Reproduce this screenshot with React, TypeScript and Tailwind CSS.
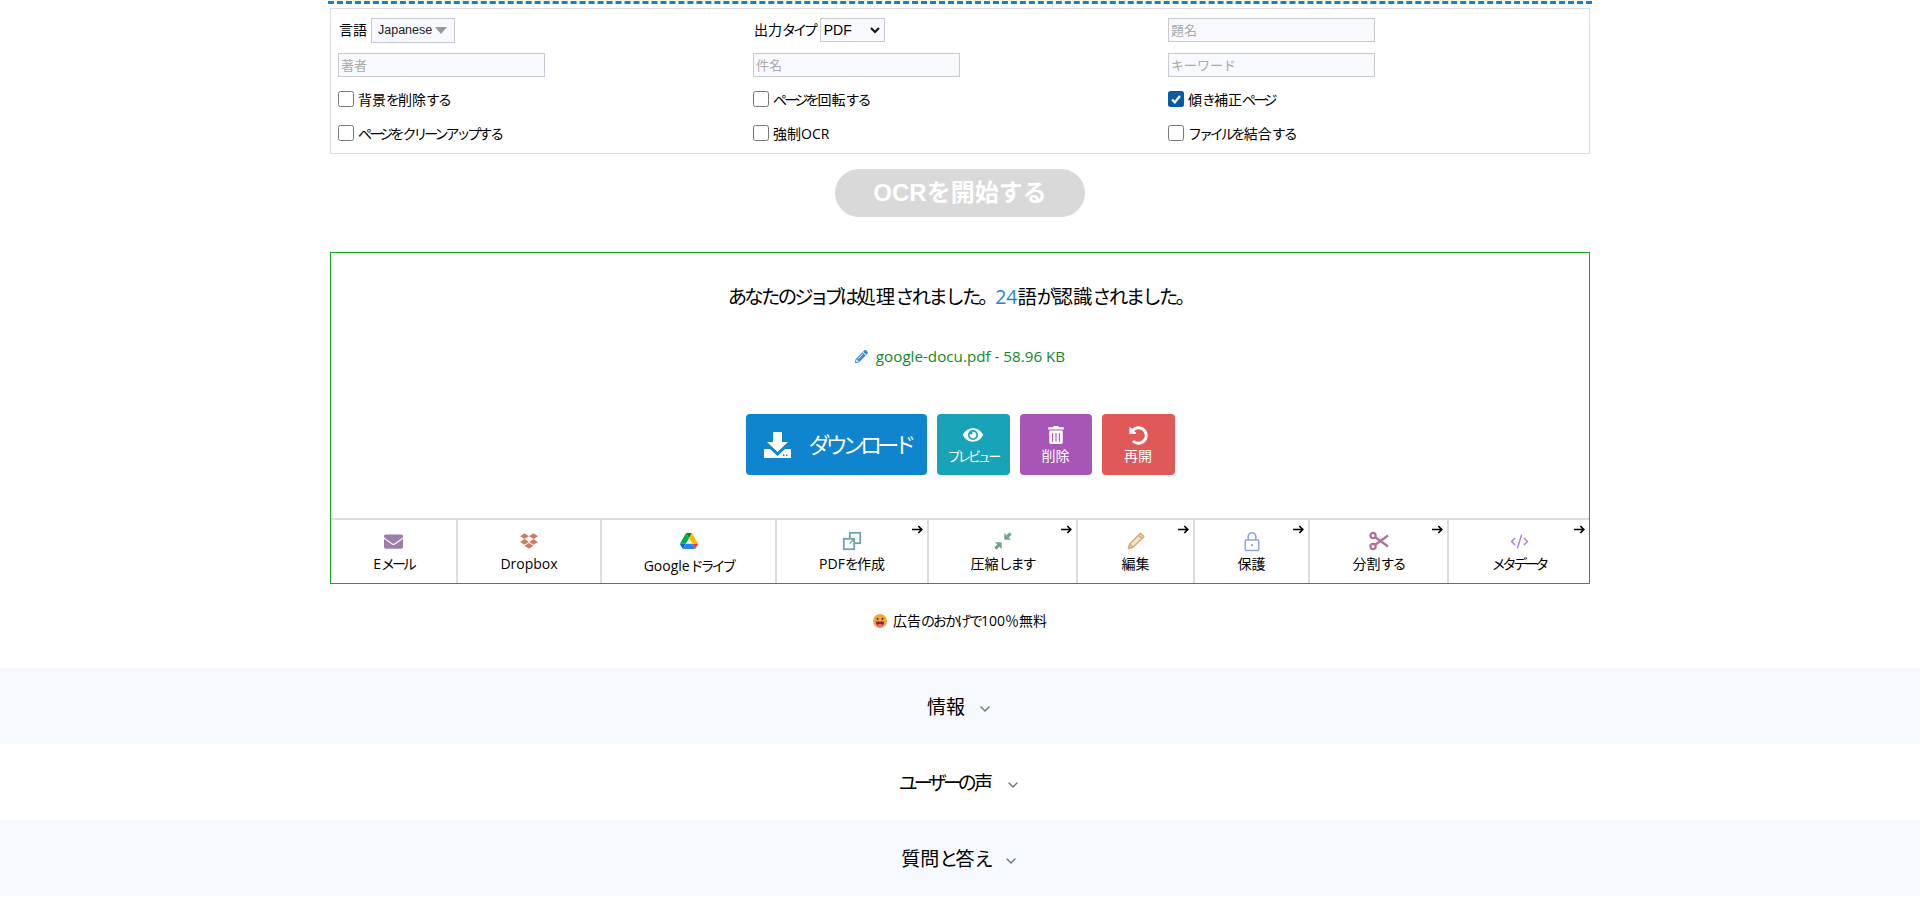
import React from "react";
import { FaEnvelope, FaDropbox, FaEye, FaTrashAlt, FaUndoAlt, FaPencilAlt } from "react-icons/fa";
import { ChevronDown, CodeXml } from "lucide-react";

const jp = "font-['Open_Sans','Noto_Sans_CJK_JP',sans-serif]";

// The reference's Japanese face has narrow kana: hiragana and katakana are tightened, kanji stay full width.
function J({ t }: { t: string }) {
  const runs = t.match(/[\u30a0-\u30ff]+|[\u3040-\u309f\u3002]+|[^\u3002\u3040-\u30ff]+/g) ?? [];
  return (
    <>
      {runs.map((r, i) => {
        const c = r.charCodeAt(0);
        if (c >= 0x30a0 && c <= 0x30ff) return <span key={i} className="tracking-[-0.22em]">{r}</span>;
        if ((c >= 0x3040 && c <= 0x309f) || c === 0x3002) return <span key={i} className="tracking-[-0.14em]">{r}</span>;
        return <span key={i}>{r}</span>;
      })}
    </>
  );
}

function GDrive() {
  return (
    <svg width="18" height="16" viewBox="0 0 87.3 78">
      <path d="m6.6 66.85 3.85 6.65c.8 1.4 1.95 2.5 3.3 3.3l13.75-23.8h-27.5c0 1.55.4 3.1 1.2 4.5z" fill="#0066da" />
      <path d="m43.65 25-13.75-23.8c-1.35.8-2.5 1.9-3.3 3.3l-25.4 44a9.06 9.06 0 0 0 -1.2 4.5h27.5z" fill="#00ac47" />
      <path d="m73.55 76.8c1.35-.8 2.5-1.9 3.3-3.3l1.6-2.75 7.65-13.25c.8-1.4 1.2-2.95 1.2-4.5h-27.502l5.852 11.5z" fill="#ea4335" />
      <path d="m43.65 25 13.75-23.8c-1.35-.8-2.9-1.2-4.5-1.2h-18.5c-1.6 0-3.15.45-4.5 1.2z" fill="#00832d" />
      <path d="m59.8 53h-32.3l-13.75 23.8c1.35.8 2.9 1.2 4.5 1.2h50.8c1.6 0 3.15-.45 4.5-1.2z" fill="#2684fc" />
      <path d="m73.4 26.5-12.7-22c-.8-1.4-1.95-2.5-3.3-3.3l-13.75 23.8 16.15 28h27.45c0-1.55-.4-3.1-1.2-4.5z" fill="#ffba00" />
    </svg>
  );
}

function CreateIcon() {
  return (
    <svg width="20" height="20" viewBox="0 0 20 20" fill="none" stroke="#6ba6b0" strokeWidth="1.8">
      <rect x="7.8" y="1.8" width="10.4" height="10.4" fill="#fff" />
      <rect x="1.8" y="7.8" width="10.4" height="10.4" fill="#fff" />
      <path d="M7.5 12.5 12 8M9 8h3v3" strokeWidth="1.2" />
    </svg>
  );
}

function CompressIcon() {
  return (
    <svg width="20" height="20" viewBox="0 0 18 18" fill="#6fa38f">
      <path d="M16.8 3.2 14.8 1.2 12.2 3.8 10.2 1.8V7.8H16.2L14.2 5.8Z" />
      <path d="M1.2 14.8 3.2 16.8 5.8 14.2 7.8 16.2V10.2H1.8L3.8 12.2Z" />
    </svg>
  );
}

function PencilIcon() {
  return (
    <svg width="20" height="20" viewBox="0 0 20 20" fill="#f5e6d2" stroke="#d9a86c" strokeWidth="1.5" strokeLinejoin="round">
      <path d="M14.5 2.2 17.8 5.5 7 16.3 2.4 17.6 3.7 13Z" />
      <path d="M12.6 4.1 15.9 7.4M3.7 13 7 16.3" fill="none" />
    </svg>
  );
}

function LockIcon() {
  return (
    <svg width="18" height="21" viewBox="0 0 18 21" fill="none" stroke="#8ca6d6" strokeWidth="1.5">
      <path d="M5.2 9V5.5a3.8 3.8 0 0 1 7.6 0V9" />
      <rect x="2.3" y="9" width="13.4" height="10.5" rx="1" />
      <circle cx="9" cy="14.2" r="1.1" fill="#8ca6d6" stroke="none" />
    </svg>
  );
}

function ScissorsIcon() {
  return (
    <svg width="20" height="20" viewBox="0 0 20 20" fill="none" stroke="#b56f9a" strokeWidth="2.2">
      <circle cx="4" cy="4.5" r="2.6" />
      <circle cx="4" cy="15.5" r="2.6" />
      <path d="M6 6 19 15.5M6 14 19 4.5" />
    </svg>
  );
}

function CornerArrow() {
  return (
    <svg width="11" height="9" viewBox="0 0 11 9" fill="none" stroke="#000" strokeWidth="1.7" className="absolute top-[5px] right-[4px]">
      <path d="M0 4.5h9.5M6.3 1l3.5 3.5L6.3 8" />
    </svg>
  );
}

function SmileEmoji() {
  return (
    <svg width="14" height="14" viewBox="0 0 14 14" className="shrink-0">
      <circle cx="7" cy="7" r="7" fill="#f5a63a" />
      <circle cx="4.6" cy="4.8" r="1.1" fill="#5b3a1e" />
      <circle cx="9.4" cy="4.8" r="1.1" fill="#5b3a1e" />
      <path d="M2.8 7.4h8.4c0 3-1.8 5-4.2 5s-4.2-2-4.2-5z" fill="#8c2358" />
      <path d="M4.5 11c.8-1.2 4.2-1.2 5 0-.7.9-1.5 1.4-2.5 1.4s-1.8-.5-2.5-1.4z" fill="#ef6f9a" />
    </svg>
  );
}

function TextInput({ placeholder }: { placeholder: string }) {
  return (
    <input
      placeholder={placeholder}
      className="w-[207px] h-[24px] border border-[#c9c9d4] bg-[#f8f9ff] px-[2px] text-[13px] placeholder:text-[#a9a9a9] outline-none"
    />
  );
}

function Check({ label, checked }: { label: string; checked?: boolean }) {
  return (
    <label className="flex items-center gap-[4px] h-[20px] text-[14px] text-black">
      {checked ? (
        <span className="w-[16px] h-[16px] rounded-[2.5px] bg-[#0b5aa5] flex items-center justify-center">
          <svg width="12" height="12" viewBox="0 0 12 12" fill="none" stroke="#fff" strokeWidth="2.2"><path d="M2 6.5 4.8 9.3 10 3" /></svg>
        </span>
      ) : (
        <span className="w-[16px] h-[16px] rounded-[2.5px] border border-[#767676] bg-white" />
      )}
      <span><J t={label} /></span>
    </label>
  );
}

type Tool = { w: string; label: string; icon: React.ReactNode; arrow?: boolean; nudge?: boolean };

const tools: Tool[] = [
  { w: "w-[125px]", label: "Eメール", icon: <FaEnvelope size={19} color="#9c7fa8" /> },
  { w: "w-[144px]", label: "Dropbox", icon: <FaDropbox size={18} color="#cf7d5f" /> },
  { w: "w-[175px]", label: "Googleドライブ", icon: <GDrive />, nudge: true },
  { w: "w-[152px]", label: "PDFを作成", icon: <CreateIcon />, arrow: true },
  { w: "w-[149px]", label: "圧縮します", icon: <CompressIcon />, arrow: true },
  { w: "w-[117px]", label: "編集", icon: <PencilIcon />, arrow: true },
  { w: "w-[115px]", label: "保護", icon: <LockIcon />, arrow: true },
  { w: "w-[139px]", label: "分割する", icon: <ScissorsIcon />, arrow: true },
  { w: "flex-1", label: "メタデータ", icon: <CodeXml size={19} color="#a77fdc" strokeWidth={1.8} />, arrow: true },
];

function Panel({ label, tinted }: { label: string; tinted?: boolean }) {
  return (
    <div className={`h-[76px] pt-[2px] flex items-center justify-center gap-[12px] text-[19px] text-black ${tinted ? "bg-[#f6f9fe]" : "bg-white"}`}>
      <span><J t={label} /></span>
      <ChevronDown size={16} color="#6b7280" className="mt-[4px]" />
    </div>
  );
}

function SideBtn({ bg, w, icon, label, size }: { bg: string; w: string; icon: React.ReactNode; label: string; size: string }) {
  return (
    <div className={`${bg} ${w} h-[61px] rounded-[4px] flex flex-col items-center justify-center text-white ${size} leading-[18px]`}>
      <div className="h-[22px] flex items-center">{icon}</div>
      <span className="mt-[1px]"><J t={label} /></span>
    </div>
  );
}

export default function App() {
  return (
    <div className={`min-h-[911px] bg-white overflow-hidden ${jp}`}>
      <div className="w-[1264px] mx-auto h-[4px] bg-[#fdf8e6] border-b-[3px] border-dashed border-[#0a84d6]" />
      <div className="w-[1260px] mx-auto">
        <div className="mt-[4px] h-[146px] border border-[#dcdcdc] pl-[7px] pt-[8px]">
          <div className="grid grid-cols-[415px_415px_1fr] gap-y-[11px] items-center">
            <div className="flex items-center gap-[4px] h-[25px] text-[14px] text-black">
              <span className="ml-[1px]">言語</span>
              <span className="mt-[1px] h-[25px] w-[84px] border border-[#c9c9d4] bg-[#f8f9ff] flex items-center pl-[6px] text-[12.5px] font-['Liberation_Sans'] text-[#222]">
                Japanese
                <svg width="12" height="7" viewBox="0 0 12 7" className="ml-[3px]"><path d="M0 0h12L6 7z" fill="#999" /></svg>
              </span>
            </div>
            <div className="flex items-center gap-[5px] h-[25px] text-[14px] text-black">
              <span className="ml-[1px]"><J t="出力タイプ" /></span>
              <span className="mt-[1px] h-[24px] w-[65px] border border-[#c9c9d4] bg-[#f8f9ff] flex items-center justify-between pl-[3px] pr-[4px] text-[14px] font-['Liberation_Sans'] text-black">
                PDF
                <svg width="10" height="7" viewBox="0 0 10 7" fill="none" stroke="#111" strokeWidth="2"><path d="M1 1l4 4 4-4" /></svg>
              </span>
            </div>
            <TextInput placeholder="題名" />
            <TextInput placeholder="著者" />
            <TextInput placeholder="件名" />
            <TextInput placeholder="キーワード" />
          </div>
          <div className="grid grid-cols-[415px_415px_1fr] gap-y-[14px] mt-[12px]">
            <Check label="背景を削除する" />
            <Check label="ページを回転する" />
            <Check label="傾き補正ページ" checked />
            <Check label="ページをクリーンアップする" />
            <Check label="強制OCR" />
            <Check label="ファイルを結合する" />
          </div>
        </div>

        <div className="mt-[15px] flex justify-center">
          <div className="w-[250px] h-[48px] rounded-[24px] bg-[#d9d9d9] text-white text-[24px] font-bold flex items-center justify-center font-['Liberation_Sans','Noto_Sans_CJK_JP',sans-serif]">
            OCRを開始する
          </div>
        </div>

        <div className="mt-[35px] h-[332px] border border-[#14a814] flex flex-col">
          <div className="mt-[31px] text-center text-[19.4px] leading-[26px] text-black">
            <J t="あなたのジョブは処理されました。" /><span className="text-[#1a86d0]">24</span><J t="語が認識されました。" />
          </div>
          <div className="mt-[36px] flex items-center justify-center gap-[8px] text-[15.2px] leading-[20px] text-[#14881e]">
            <FaPencilAlt size={13} color="#3a8ad8" />
            <span>google-docu.pdf - 58.96 KB</span>
          </div>
          <div className="mt-[48px] flex justify-center gap-[10px]">
            <div className="w-[181px] h-[61px] rounded-[4px] bg-[#0f84cf] flex items-center text-white text-[22px] pl-[17px] gap-[17px] whitespace-nowrap">
              <svg width="29" height="28" viewBox="0 0 29 28" fill="#fff" className="shrink-0">
                <path d="M10 1h9v10h6L14.5 21 4 11h6z" />
                <path fillRule="evenodd" d="M1 18h6l7.5 7 7.5-7h6v9H1zM20 23.5h1.5v1.5H20zM23 23.5h1.5v1.5H23z" />
              </svg>
              <span><J t="ダウンロード" /></span>
            </div>
            <SideBtn bg="bg-[#18a3b8]" w="w-[73px]" size="text-[13px]" icon={<FaEye size={20} />} label="プレビュー" />
            <SideBtn bg="bg-[#a855b8]" w="w-[72px]" size="text-[14px]" icon={<FaTrashAlt size={18} />} label="削除" />
            <SideBtn bg="bg-[#e15858]" w="w-[73px]" size="text-[14px]" icon={<FaUndoAlt size={19} />} label="再開" />
          </div>
          <div className="mt-auto h-[65px] flex border-t-2 border-[#dcdcdc]">
            {tools.map((t, i) => (
              <div key={t.label} className={`${t.w} relative flex flex-col items-center pt-[10px] text-[14px] text-black ${i > 0 ? "border-l-2 border-[#dcdcdc]" : ""}`}>
                <div className="h-[22px] flex items-center justify-center">{t.icon}</div>
                <span className={`${t.nudge ? "mt-[4px]" : "mt-[2px]"} leading-[20px]`}><J t={t.label} /></span>
                {t.arrow && <CornerArrow />}
              </div>
            ))}
          </div>
        </div>

        <div className="mt-[28px] flex items-center justify-center gap-[6px] text-[14px] leading-[18px] text-black">
          <SmileEmoji />
          <span><J t="広告のおかげで100％無料" /></span>
        </div>
      </div>
      <div className="mt-[38px]">
        <Panel label="情報" tinted />
        <Panel label="ユーザーの声" />
        <Panel label="質問と答え" tinted />
      </div>
    </div>
  );
}
